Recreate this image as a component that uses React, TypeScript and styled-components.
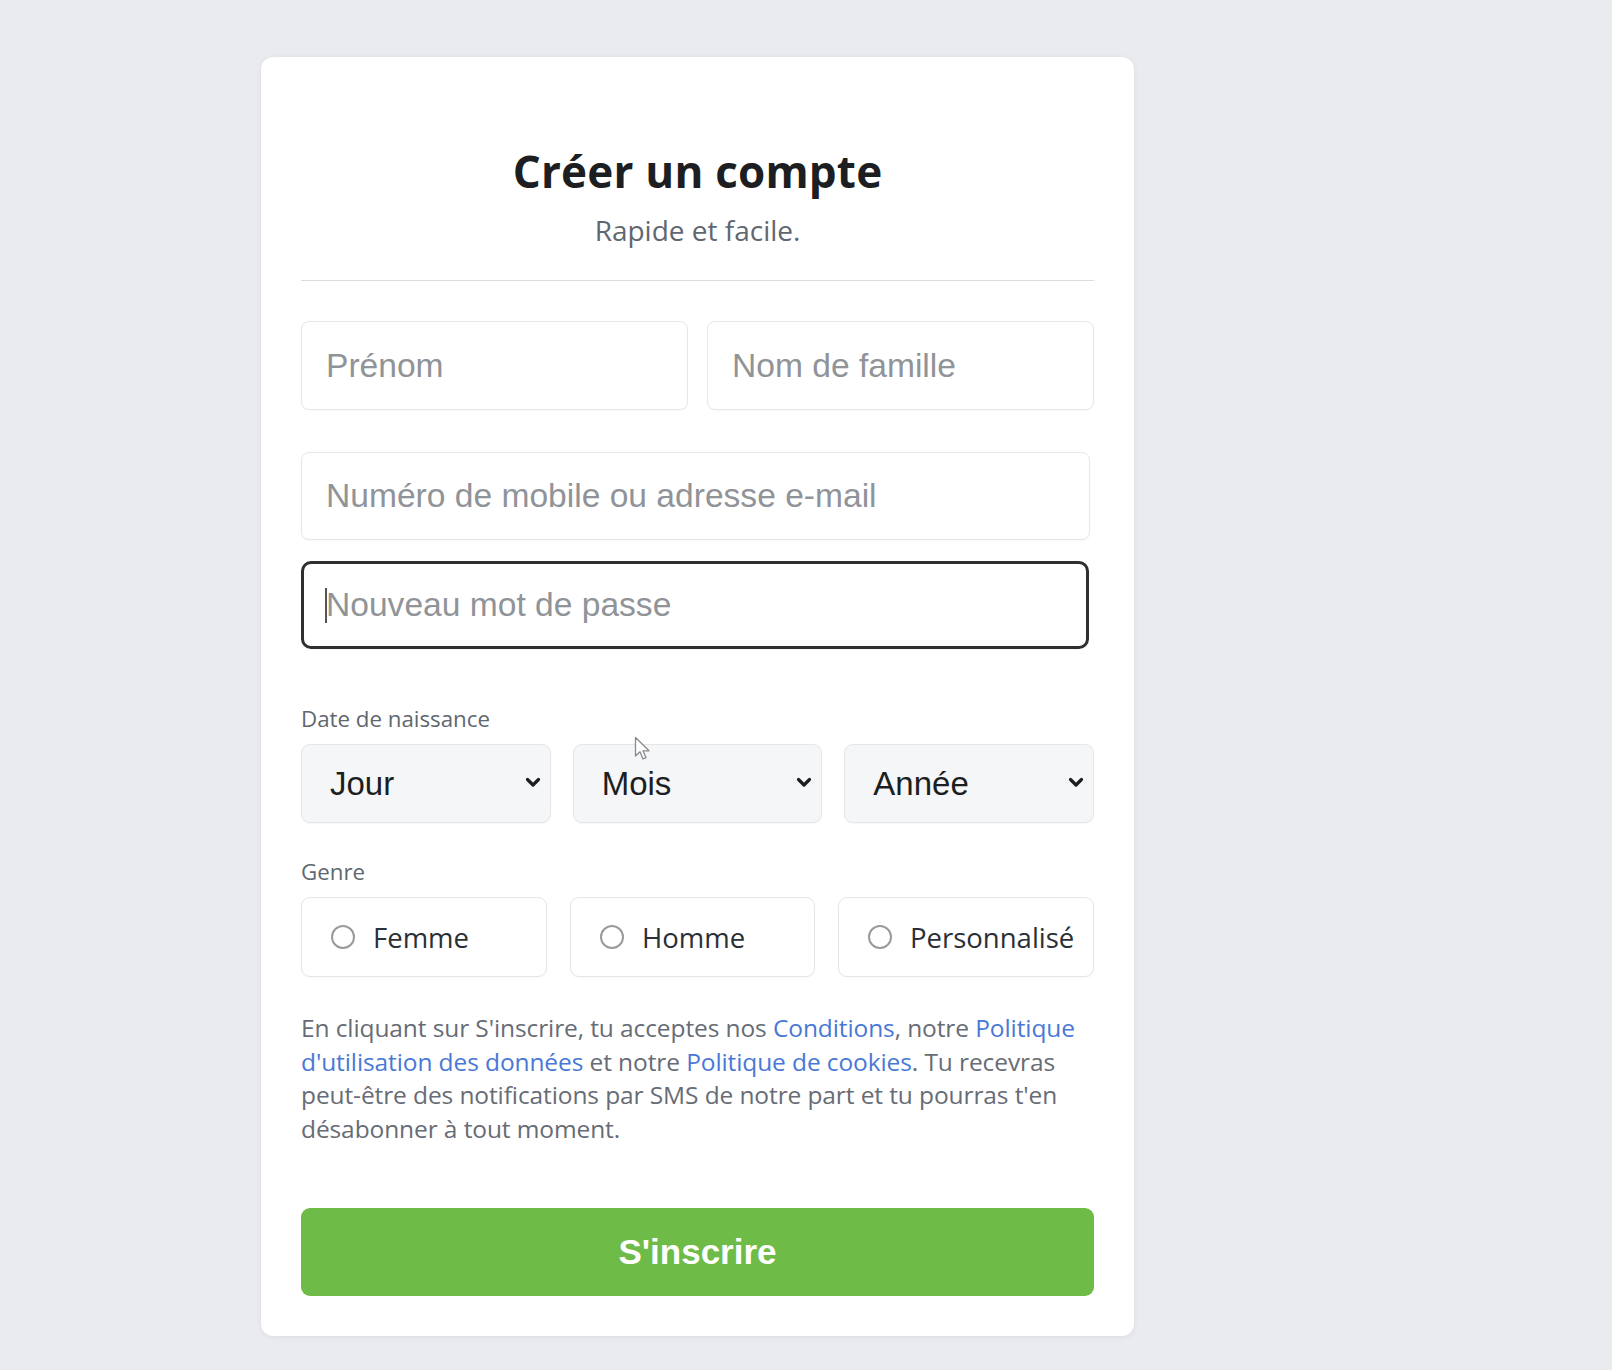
import React from "react";
import styled, { createGlobalStyle } from "styled-components";

const GlobalStyle = createGlobalStyle`
  html, body {
    margin: 0;
    padding: 0;
    background: #e9ebee;
  }
  body {
    font-family: "Open Sans", "Liberation Sans", sans-serif;
  }
  * { box-sizing: border-box; }
`;

const Page = styled.div`
  position: relative;
  min-height: 1370px;
  padding: 57px 0 0 261px;
`;

const Card = styled.form`
  width: 873px;
  background: #ffffff;
  border-radius: 12px;
  box-shadow: 0 1px 6px rgba(0, 0, 0, 0.06), 0 0 1px rgba(0, 0, 0, 0.05);
  padding: 89px 40px 40px;
  display: flex;
  flex-direction: column;
`;

const Header = styled.header`
  display: flex;
  flex-direction: column;
  align-items: center;
`;

const Title = styled.h1`
  margin: 0;
  font-family: "Open Sans", sans-serif;
  font-weight: 700;
  font-size: 44px;
  line-height: 51px;
  color: #1c1e21;
  letter-spacing: 0.2px;
`;

const Subtitle = styled.p`
  margin: 17px 0 0;
  font-family: "Open Sans", sans-serif;
  font-size: 28px;
  line-height: 32px;
  color: #606770;
`;

const Divider = styled.hr`
  width: 100%;
  margin: 34px 0 0;
  border: none;
  border-top: 1px solid #dadde1;
`;

const NameRow = styled.div`
  margin-top: 40px;
  display: grid;
  grid-template-columns: 1fr 1fr;
  gap: 19px;
`;

const TextInput = styled.input<{ $wide?: boolean; $active?: boolean; $mt?: number }>`
  display: block;
  width: ${(p) => (p.$wide ? "789px" : "100%")};
  height: ${(p) => (p.$wide ? "88px" : "89px")};
  margin-top: ${(p) => p.$mt ?? 0}px;
  padding: 0 ${(p) => (p.$active ? 22 : 24)}px;
  border: ${(p) => (p.$active ? "3px solid #2d2f31" : "1px solid #e6e7e9")};
  border-radius: ${(p) => (p.$active ? 10 : 8)}px;
  background: #ffffff;
  font-family: "Liberation Sans", Arial, sans-serif;
  font-size: 33.6px;
  color: #1c1e21;
  outline: none;
  box-shadow: 0 1px 2px rgba(0, 0, 0, 0.03);
  &::placeholder {
    color: #909398;
  }
`;

const Field = styled.div`
  position: relative;
  width: 788px;
  margin-top: 21px;
`;

const Caret = styled.span`
  position: absolute;
  left: 24px;
  top: 27px;
  width: 2px;
  height: 35px;
  background: #555;
`;

const Label = styled.div<{ $mt: number }>`
  margin-top: ${(p) => p.$mt}px;
  font-family: "Open Sans", sans-serif;
  font-size: 22.3px;
  line-height: 28px;
  color: #606770;
`;

const SelectRow = styled.div`
  margin-top: 11px;
  display: grid;
  grid-template-columns: repeat(3, 1fr);
  gap: 22px;
`;

const SelectBox = styled.div`
  position: relative;
  height: 79px;
`;

const Select = styled.select`
  appearance: none;
  -webkit-appearance: none;
  width: 100%;
  height: 100%;
  padding: 0 28px;
  border: 1px solid #e4e6e9;
  border-radius: 9px;
  background: #f5f6f7;
  font-family: "Liberation Sans", Arial, sans-serif;
  font-size: 33px;
  color: #1c1e21;
  outline: none;
  box-shadow: 0 1px 2px rgba(0, 0, 0, 0.04);
`;

const Chevron = styled.svg`
  position: absolute;
  right: 10px;
  top: 33px;
  width: 16px;
  height: 11px;
  pointer-events: none;
`;

const GenderRow = styled.div`
  margin-top: 11px;
  display: grid;
  grid-template-columns: 246px 245px 256px;
  gap: 23px;
`;

const GenderOption = styled.label`
  height: 80px;
  min-width: 0;
  display: flex;
  align-items: center;
  gap: 18px;
  padding: 0 0 0 29px;
  border: 1px solid #e4e6e9;
  border-radius: 9px;
  background: #ffffff;
  box-shadow: 0 1px 2px rgba(0, 0, 0, 0.03);
  font-family: "Open Sans", sans-serif;
  font-size: 27.5px;
  color: #2b2f36;
  white-space: nowrap;
  overflow: hidden;
`;

const RadioDot = styled.span`
  width: 24px;
  height: 24px;
  flex: none;
  border: 2px solid #9a9a9a;
  border-radius: 50%;
  background: #ffffff;
`;

const Terms = styled.p`
  margin: 34px 0 0;
  font-family: "Open Sans", sans-serif;
  font-size: 24.5px;
  line-height: 33.5px;
  color: #676c75;
  white-space: nowrap;
  letter-spacing: -0.1px;
`;

const TermsLink = styled.a`
  color: #4a78d6;
  text-decoration: none;
`;

const SubmitButton = styled.button`
  margin-top: 63px;
  height: 88px;
  width: 100%;
  border: none;
  border-radius: 9px;
  background: #6fbb47;
  color: #ffffff;
  font-family: "Liberation Sans", Arial, sans-serif;
  font-weight: 700;
  font-size: 35px;
  cursor: pointer;
`;

const Pointer = styled.svg`
  position: absolute;
  left: 634px;
  top: 736px;
  width: 18px;
  height: 26px;
  pointer-events: none;
`;

const days = ["Jour"];
const months = ["Mois"];
const years = ["Année"];

export default function App() {
  return (
    <>
      <GlobalStyle />
      <Page>
        <Card onSubmit={(e) => e.preventDefault()}>
          <Header>
            <Title>Créer un compte</Title>
            <Subtitle>Rapide et facile.</Subtitle>
          </Header>
          <Divider />
          <NameRow>
            <TextInput placeholder="Prénom" />
            <TextInput placeholder="Nom de famille" />
          </NameRow>
          <TextInput $wide $mt={42} placeholder="Numéro de mobile ou adresse e-mail" />
          <Field>
            <TextInput $wide $active type="password" placeholder="Nouveau mot de passe" style={{ width: "100%" }} />
            <Caret />
          </Field>

          <Label $mt={56}>Date de naissance</Label>
          <SelectRow>
            {[days, months, years].map((opts) => (
              <SelectBox key={opts[0]}>
                <Select defaultValue={opts[0]}>
                  {opts.map((o) => (
                    <option key={o}>{o}</option>
                  ))}
                </Select>
                <Chevron viewBox="0 0 16 11">
                  <path d="M2.5 2.5 L8 8 L13.5 2.5" fill="none" stroke="#1c1e21" strokeWidth="3.2" strokeLinecap="round" strokeLinejoin="round" />
                </Chevron>
              </SelectBox>
            ))}
          </SelectRow>

          <Label $mt={35}>Genre</Label>
          <GenderRow>
            {["Femme", "Homme", "Personnalisé"].map((g) => (
              <GenderOption key={g}>
                <RadioDot />
                {g}
              </GenderOption>
            ))}
          </GenderRow>

          <Terms>
            En cliquant sur S'inscrire, tu acceptes nos <TermsLink href="#">Conditions</TermsLink>, notre{" "}
            <TermsLink href="#">Politique</TermsLink>
            <br />
            <TermsLink href="#">d'utilisation des données</TermsLink> et notre{" "}
            <TermsLink href="#">Politique de cookies</TermsLink>. Tu recevras
            <br />
            peut-être des notifications par SMS de notre part et tu pourras t'en
            <br />
            désabonner à tout moment.
          </Terms>

          <SubmitButton type="submit">S'inscrire</SubmitButton>
        </Card>
        <Pointer viewBox="0 0 18 26">
          <path d="M1.5 1.5 L1.5 20 L6 15.8 L9 23 L12 21.7 L9 14.8 L15 14.8 Z" fill="#ffffff" stroke="#8a8a8a" strokeWidth="1.3" strokeLinejoin="round" />
        </Pointer>
      </Page>
    </>
  );
}
